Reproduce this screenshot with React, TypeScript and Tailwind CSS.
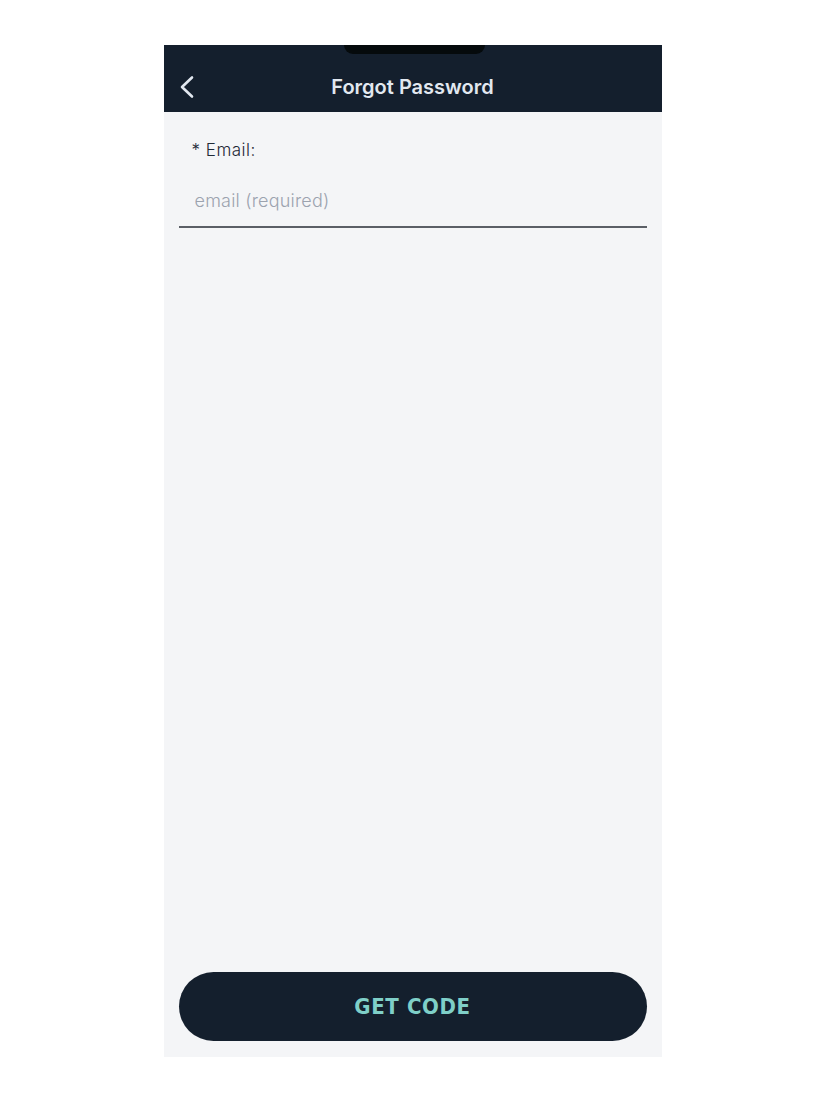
export default function App() {
  return (
    <div className="min-h-[1100px] w-full bg-white flex justify-center pt-[45px]">
      <div className="w-[498px] h-[1012px] bg-[#f4f5f7] flex flex-col relative font-['Inter',sans-serif]">
        {/* notch */}
        <div className="absolute z-10 left-[180px] top-0 w-[141px] h-[9px] bg-[#050a0c] rounded-b-[10px]" />

        <header className="h-[67px] bg-[#141f2d] flex items-center relative shrink-0">
          <button className="absolute left-[15px] top-[30px] text-[#e2e8f0]">
            <svg width="16" height="24" viewBox="0 0 16 24" fill="none">
              <polyline points="13,2.5 3,12 13,21.5" stroke="currentColor" strokeWidth="2.6" strokeLinecap="round" strokeLinejoin="round" />
            </svg>
          </button>
          <h1 className="w-full text-center text-[20px] font-semibold text-[#e2e8f0] pt-[16px]">
            Forgot Password
          </h1>
        </header>

        <div className="px-[15px] pt-[26px] flex-1 flex flex-col">
          <label className="pl-[13px] text-[17px] leading-[24px] font-light text-[#1f2937] tracking-[0.5px]">* Email:</label>
          <input
            placeholder="email (required)"
            className="mt-[10px] h-[56px] pt-[3px] pl-[16px] text-[18px] font-light bg-transparent border-b-[2px] border-[#5b5f66] outline-none placeholder:text-[#9ca3af] tracking-[0.2px]"
          />
          <div className="flex-1" />
          <button className="mb-[16px] h-[69px] w-full rounded-full bg-[#141f2d] text-[#7fcfc8] text-[22px] font-bold tracking-[0.6px] font-['DejaVu_Sans_Condensed','DejaVu_Sans',sans-serif]">
            GET CODE
          </button>
        </div>
      </div>
    </div>
  );
}
